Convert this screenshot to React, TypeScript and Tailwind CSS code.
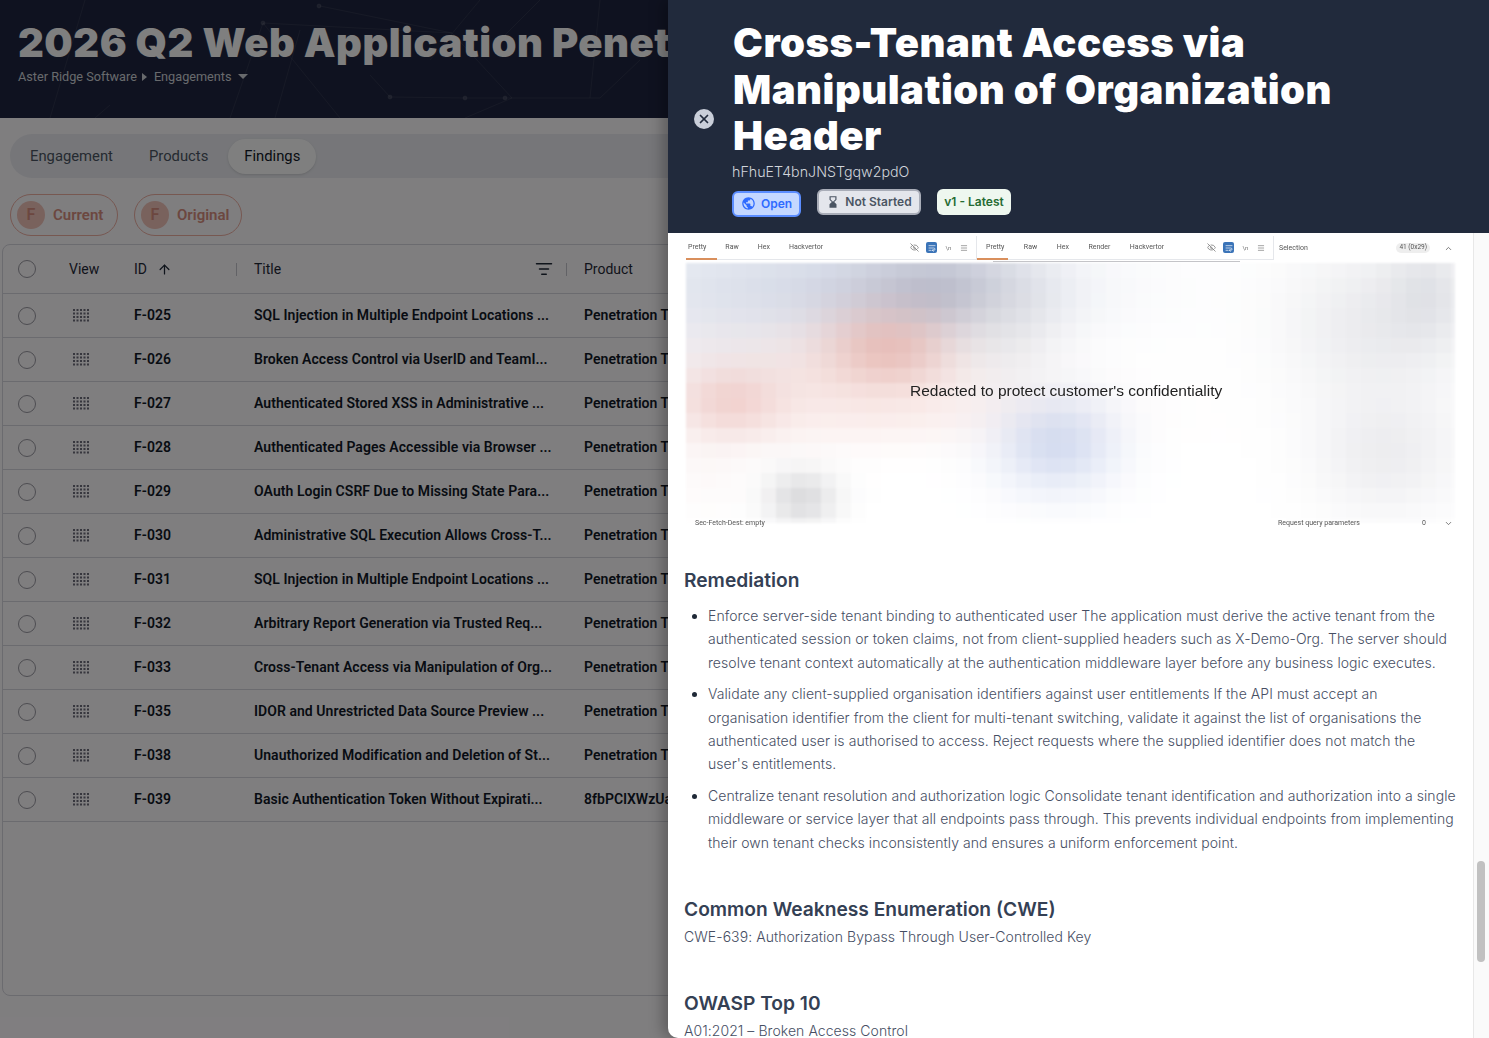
import React from 'react';
import { ArrowUp, ListFilter, X, EyeOff, ChevronUp, ChevronDown, WrapText, Menu } from 'lucide-react';
import { MdPublic, MdHourglassBottom } from 'react-icons/md';

const findings = [
  ['F-025', 'SQL Injection in Multiple Endpoint Locations ...', 'Penetration Testing'],
  ['F-026', 'Broken Access Control via UserID and TeamI...', 'Penetration Testing'],
  ['F-027', 'Authenticated Stored XSS in Administrative ...', 'Penetration Testing'],
  ['F-028', 'Authenticated Pages Accessible via Browser ...', 'Penetration Testing'],
  ['F-029', 'OAuth Login CSRF Due to Missing State Para...', 'Penetration Testing'],
  ['F-030', 'Administrative SQL Execution Allows Cross-T...', 'Penetration Testing'],
  ['F-031', 'SQL Injection in Multiple Endpoint Locations ...', 'Penetration Testing'],
  ['F-032', 'Arbitrary Report Generation via Trusted Req...', 'Penetration Testing'],
  ['F-033', 'Cross-Tenant Access via Manipulation of Org...', 'Penetration Testing'],
  ['F-035', 'IDOR and Unrestricted Data Source Preview ...', 'Penetration Testing'],
  ['F-038', 'Unauthorized Modification and Deletion of St...', 'Penetration Testing'],
  ['F-039', 'Basic Authentication Token Without Expirati...', '8fbPClXWzUa9'],
];

const remediation = [
  'Enforce server-side tenant binding to authenticated user The application must derive the active tenant from the authenticated session or token claims, not from client-supplied headers such as X-Demo-Org. The server should resolve tenant context automatically at the authentication middleware layer before any business logic executes.',
  'Validate any client-supplied organisation identifiers against user entitlements If the API must accept an organisation identifier from the client for multi-tenant switching, validate it against the list of organisations the authenticated user is authorised to access. Reject requests where the supplied identifier does not match the user\'s entitlements.',
  'Centralize tenant resolution and authorization logic Consolidate tenant identification and authorization into a single middleware or service layer that all endpoints pass through. This prevents individual endpoints from implementing their own tenant checks inconsistently and ensures a uniform enforcement point.',
];

// x, y, spread x, spread y, strength, rgb
const blobs: number[][] = [
  [150, 25, 210, 55, 0.85, 205, 212, 228],
  [40, 60, 90, 90, 0.4, 220, 224, 234],
  [255, 30, 85, 42, 0.8, 175, 178, 195],
  [200, 88, 65, 42, 0.8, 226, 172, 165],
  [130, 115, 170, 50, 0.4, 242, 210, 205],
  [45, 140, 50, 32, 0.6, 235, 185, 180],
  [200, 150, 190, 30, 0.35, 248, 225, 222],
  [370, 180, 60, 48, 0.7, 195, 206, 234],
  [115, 235, 35, 28, 0.7, 205, 205, 208],
  [320, 70, 50, 60, 0.45, 224, 224, 226],
  [690, 60, 90, 80, 0.55, 218, 219, 224],
  [740, 30, 40, 50, 0.55, 208, 211, 218],
  [700, 190, 70, 60, 0.45, 216, 216, 222],
  [20, 200, 40, 50, 0.2, 245, 228, 225],
];

const cellSize = 15;

function cellColor(x: number, y: number) {
  let rgb = [255, 255, 255];
  blobs.forEach(b => {
    const a = b[4] * Math.exp(-(((x - b[0]) / b[2]) ** 2 + ((y - b[1]) / b[3]) ** 2));
    rgb = rgb.map((c, i) => c * (1 - a) + b[5 + i] * a);
  });
  return `rgb(${rgb.map(Math.round).join(',')})`;
}

const Mosaic = () => {
  const cells = [];
  for (let y = 0; y < 260; y += cellSize) {
    for (let x = 0; x < 769; x += cellSize) {
      cells.push(<rect key={`${x}-${y}`} x={x} y={y} width={cellSize + 0.5} height={cellSize + 0.5} fill={cellColor(x + 7, y + 7)} />);
    }
  }
  return (
    <svg width="769" height="260" viewBox="0 0 769 260" className="block blur-[1px]">
      {cells}
    </svg>
  );
};

const Network = () => (
  <svg width="670" height="118" viewBox="0 0 670 118" className="absolute top-0 left-0" fill="none" stroke="#ffffff" strokeOpacity="0.07">
    <path d="M263 23L452 33L512 98L465 118M263 23L230 118M320 6L452 33M370 75L390 97L465 98L512 98L600 98L640 60M85 0L50 118M110 105L95 118M480 0L430 60M600 0L590 98M540 0L505 35M263 23L340 118M275 118L300 30" />
    <circle cx="319" cy="6" r="2" fill="#ffffff" fillOpacity="0.12" />
    <circle cx="263" cy="23" r="2" fill="#ffffff" fillOpacity="0.12" />
    <circle cx="390" cy="97" r="2" fill="#ffffff" fillOpacity="0.12" />
    <circle cx="465" cy="98" r="2" fill="#ffffff" fillOpacity="0.12" />
    <circle cx="505" cy="98" r="2" fill="#ffffff" fillOpacity="0.12" />
  </svg>
);

const Grip = () => (
  <svg width="17" height="13" viewBox="0 0 17 13" fill="#6f6f7c">
    {[0, 1, 2, 3].map(r =>
      [0, 1, 2, 3, 4].map(c => <rect key={`${r}${c}`} x={c * 3.5} y={r * 3.5} width="2" height="2" />)
    )}
  </svg>
);

const Radio = () => <span className="block w-4 h-4 rounded-full border border-[#9a9aa2] box-content" />;

const Pill = ({ label }: { label: string }) => (
  <div className="flex items-center h-[42px] w-[108px] rounded-full border border-[#eeb0a3] pl-[6px] gap-2">
    <span className="w-[28px] h-[28px] rounded-full bg-[#f3c4ba] flex items-center justify-center text-[#d98f80] text-base font-semibold">F</span>
    <span className="text-[#d98f80] text-[15px] font-semibold">{label}</span>
  </div>
);

const PaneTabs = ({ tabs, gap, className }: { tabs: string[]; gap: string; className: string }) => (
  <div className={`flex items-center h-[24px] border-b border-[#e5e7eb] relative ${className}`}>
    <div className="absolute left-0 bottom-[-1px] w-[31px] h-[2px] bg-[#d98f5c]" />
    <div className={`flex ${gap}`}>
      {tabs.map(t => <span key={t}>{t}</span>)}
    </div>
    <div className="ml-auto flex items-center gap-[7px] text-[#777]">
      <EyeOff size={9} />
      <span className="w-[11px] h-[11px] rounded-[2px] bg-[#3b74b8] flex items-center justify-center text-white"><WrapText size={8} /></span>
      <span className="text-[6px] w-[9px] text-center">\n</span>
      <Menu size={8} />
    </div>
  </div>
);

const RedactedImage = () => (
  <div className="relative w-[773px] h-[294px] overflow-hidden text-[7px] text-[#555] font-['Roboto',sans-serif] blur-[0.4px]">
    <div className="h-[30px] pt-[3px] flex pl-[2px]">
      <PaneTabs tabs={['Pretty', 'Raw', 'Hex', 'Hackvertor']} gap="gap-[19px] pl-[2px]" className="w-[290px] pr-[8px]" />
      <div className="w-[297px] h-[24px] border-l border-[#e5e7eb] flex">
        <PaneTabs tabs={['Pretty', 'Raw', 'Hex', 'Render', 'Hackvertor']} gap="gap-[19.5px] pl-[9px]" className="w-full pr-[8px]" />
      </div>
      <div className="flex-1 flex items-center border-l border-[#e5e7eb] pl-[5px] pr-[4px] h-[24px]">
        <span>Selection</span>
        <span className="ml-auto bg-[#eeeeee] rounded-full px-[3px] text-[6.5px]">41 (0x29)</span>
        <ChevronUp size={9} className="ml-[14px]" />
      </div>
    </div>
    <div className="pl-[2px]">
      <Mosaic />
    </div>
    <div className="relative flex items-center pl-[11px] h-[8px] -mt-[4px]">
      <span className="w-[583px]">Sec-Fetch-Dest: empty</span>
      <span>Request query parameters</span>
      <span className="ml-[62px]">0</span>
      <ChevronDown size={9} className="ml-[18px]" />
    </div>
    <div className="absolute left-[309px] top-[28px] w-[247px] h-px bg-[#c4c4c8]" />
    <div className="absolute left-[226px] top-[148px] w-[312px] whitespace-nowrap text-[#222] text-[15.5px] leading-5 font-['Liberation_Sans',sans-serif]">
      Redacted to protect customer's confidentiality
    </div>
  </div>
);

export default function App() {
  return (
    <div className="relative w-full h-screen overflow-hidden bg-[#fffcff] font-['Roboto',sans-serif]">
      {/* Page behind the drawer */}
      <div className="relative h-[118px] bg-[#1f2540] pl-[18px] pt-[20px] overflow-hidden">
        <Network />
        <h1 className="relative whitespace-nowrap text-white text-[40px] tracking-[0.5px] leading-[46.5px] font-black font-['Inter',sans-serif]">2026 Q2 Web Application Penetration Test</h1>
        <div className="relative flex items-center text-[12.7px] leading-5 text-[#d1d5db]">
          <span>Aster Ridge Software</span>
          <span className="mx-[5px] w-0 h-0 border-y-[4px] border-y-transparent border-l-[5px] border-l-[#d1d5db]" />
          <span className="ml-[2px]">Engagements</span>
          <span className="ml-[6px] w-0 h-0 border-x-[5px] border-x-transparent border-t-[5px] border-t-[#d1d5db]" />
        </div>
      </div>

      <div className="pl-[2px] pt-[16px]">
        <div className="ml-[8px] h-[44px] rounded-l-[22px] bg-[#ecedf2] flex items-center pl-[20px] text-[14.8px] text-[#4b5563]">
          <span>Engagement</span>
          <span className="ml-[36px]">Products</span>
          <span className="ml-[20px] h-[35px] w-[88px] justify-center rounded-full bg-white shadow flex items-center text-[#111827]">Findings</span>
        </div>

        <div className="ml-[8px] mt-[16px] flex gap-[16px]">
          <Pill label="Current" />
          <Pill label="Original" />
        </div>

        <div className="mt-[8px] w-[1400px] h-[752px] rounded-[8px] border border-[#d6d6de]">
          <div className="h-[49px] grid grid-cols-[66px_65px_120px_330px_1fr] items-center text-sm text-[#1f2937] border-b border-[#d6d6de]">
            <span className="pl-[15px]"><Radio /></span>
            <span>View</span>
            <span className="relative flex items-center gap-[10px]">
              ID <ArrowUp size={15} />
              <span className="absolute right-[17px] w-px h-[13px] bg-[#c4c4cc]" />
            </span>
            <span className="relative flex items-center">
              Title
              <ListFilter size={18} className="absolute right-[31px]" />
              <span className="absolute right-[17px] w-px h-[13px] bg-[#c4c4cc]" />
            </span>
            <span>Product</span>
          </div>
          {findings.map(f => (
            <div key={f[0]} className="h-[44px] pb-[2px] grid grid-cols-[66px_65px_120px_330px_1fr] items-center text-sm tracking-[0.05px] font-semibold text-[#111827] border-b border-[#d6d6de]">
              <span className="pl-[15px] pt-[2px]"><Radio /></span>
              <span className="pl-[4px] pt-[2px]"><Grip /></span>
              <span>{f[0]}</span>
              <span>{f[1]}</span>
              <span>{f[2]}</span>
            </div>
          ))}
        </div>
      </div>

      {/* Dim layer */}
      <div className="absolute inset-0 bg-black/50" />

      {/* Drawer */}
      <div className="absolute top-0 bottom-0 left-[668px] right-0 bg-white rounded-bl-[10px] overflow-hidden shadow-[-6px_0_14px_rgba(0,0,0,0.25)] flex flex-col">
        <div className="h-[233px] shrink-0 bg-[#212a3c] flex items-start pl-[26px] pt-[20px]">
          <button className="mt-[89px] w-5 h-5 rounded-full bg-[#c9ced9] flex items-center justify-center text-[#212a3c]">
            <X size={14} strokeWidth={3} />
          </button>
          <div className="ml-[19px]">
            <h2 className="w-[660px] text-white text-[40px] tracking-[0.5px] leading-[46.5px] font-black font-['Inter',sans-serif]">Cross-Tenant Access via Manipulation of Organization Header</h2>
            <div className="mt-[2px] text-[#d1d5db] text-[14.25px] leading-5 font-light font-['Inter',sans-serif] -ml-[1px]">hFhuET4bnJNSTgqw2pdO</div>
            <div className="mt-[7px] flex items-start font-['Inter',sans-serif] text-xs font-semibold -ml-[1px]">
              <span className="mt-[2px] h-[26px] w-[69px] rounded-[6px] border-2 border-[#5b8dff] bg-[#c4d7ff] text-[#2f6bff] flex items-center justify-center gap-[5px]">
                <MdPublic size={15} /> Open
              </span>
              <span className="ml-[16px] h-[26px] w-[104px] rounded-[6px] border-2 border-[#a9adb8] bg-[#e4e6ec] text-[#4b5563] flex items-center justify-center gap-[5px]">
                <MdHourglassBottom size={14} /> Not Started
              </span>
              <span className="ml-[16px] h-[26px] w-[74px] rounded-[6px] bg-[#eef7ef] text-[#256b33] flex items-center justify-center">v1 - Latest</span>
            </div>
          </div>
        </div>

        <div className="flex-1 flex min-h-0">
          <div className="flex-1 pl-[16px] text-[#464e63] font-['Inter',sans-serif] overflow-hidden">
            <RedactedImage />
            <h3 className="mt-[39px] text-[19.2px] leading-7 font-semibold text-[#344054]">Remediation</h3>
            <ul className="mt-[10px] w-[773px] list-disc pl-[24px] text-[14px] tracking-[0.06px] leading-[23.4px] font-light flex flex-col gap-[8px] marker:text-[#1f2937]">
              {remediation.map(r => <li key={r.slice(0, 12)}>{r}</li>)}
            </ul>
            <h3 className="mt-[41px] text-[19.2px] leading-7 font-semibold text-[#344054]">Common Weakness Enumeration (CWE)</h3>
            <p className="mt-[2px] text-[14px] tracking-[0.06px] leading-[23.4px] font-light">CWE-639: Authorization Bypass Through User-Controlled Key</p>
            <h3 className="mt-[41px] text-[19.2px] leading-7 font-semibold text-[#344054]">OWASP Top 10</h3>
            <p className="mt-[2px] text-[14px] tracking-[0.06px] leading-[23.4px] font-light">A01:2021 – Broken Access Control</p>
          </div>
          <div className="w-[16px] shrink-0 bg-[#fafafa] border-l border-[#e8e8e8] pt-[628px] pl-[3px]">
            <div className="w-[8px] h-[101px] rounded-full bg-[#c1c1c1]" />
          </div>
        </div>
      </div>
    </div>
  );
}
